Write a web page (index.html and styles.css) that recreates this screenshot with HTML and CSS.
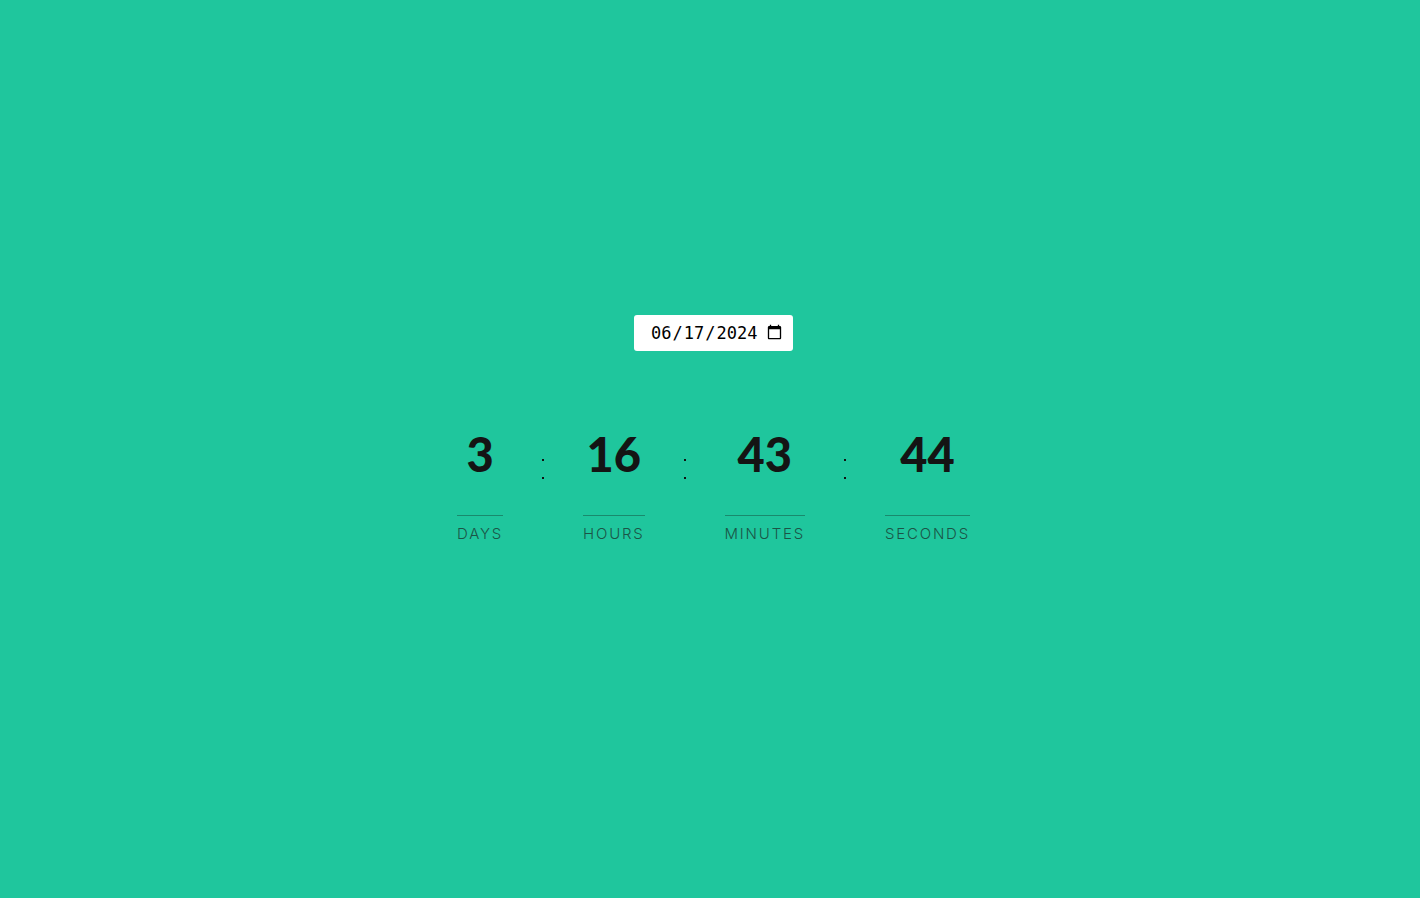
FILE: index.html
```html
<!DOCTYPE html>
<html lang="en">
<head>
<meta charset="utf-8">
<title>Countdown</title>
<link rel="stylesheet" href="styles.css">
</head>
<body>
<main class="app">
  <input class="date-input" type="date" value="2024-06-17">
  <div class="countdown">
    <div class="unit">
      <span class="num">3</span>
      <span class="label">DAYS</span>
    </div>
    <div class="sep"><i></i><i></i></div>
    <div class="unit">
      <span class="num">16</span>
      <span class="label">HOURS</span>
    </div>
    <div class="sep"><i></i><i></i></div>
    <div class="unit">
      <span class="num">43</span>
      <span class="label">MINUTES</span>
    </div>
    <div class="sep"><i></i><i></i></div>
    <div class="unit">
      <span class="num">44</span>
      <span class="label">SECONDS</span>
    </div>
  </div>
</main>
</body>
</html>
```

FILE: styles.css
```css
html, body {
  margin: 0;
  height: 100%;
}
body {
  background: #1fc69d;
  font-family: "Inter", "Open Sans", sans-serif;
  display: flex;
  justify-content: center;
  align-items: center;
  padding-left: 7px;
  box-sizing: border-box;
}
.app {
  display: flex;
  flex-direction: column;
  align-items: center;
  margin-bottom: 41px;
}
.date-input {
  font-family: "DejaVu Sans Mono", monospace;
  font-size: 17px;
  color: #000;
  background: #fff;
  border: none;
  border-radius: 3px;
  padding: 0 8px 0 16px;
  height: 36px;
  width: 159px;
  box-sizing: border-box;
  outline: none;
}
.countdown {
  display: flex;
  align-items: flex-start;
  margin-top: 74px;
}
.unit {
  display: flex;
  flex-direction: column;
  align-items: stretch;
  text-align: center;
}
.num {
  font-family: "Lato", "Inter", sans-serif;
  font-size: 47px;
  font-weight: 900;
  line-height: 58px;
  color: #141414;
  margin-bottom: 32px;
}
.label {
  border-top: 1px solid #198a6d;
  padding-top: 9px;
  font-size: 15px;
  font-weight: 300;
  letter-spacing: 1.8px;
  line-height: 18px;
  color: #1b5446;
}
.sep {
  width: 2px;
  margin: 34px 39px 0;
  display: flex;
  flex-direction: column;
  gap: 16px;
}
.sep i {
  display: block;
  width: 2px;
  height: 2px;
  background: #111;
}
```
